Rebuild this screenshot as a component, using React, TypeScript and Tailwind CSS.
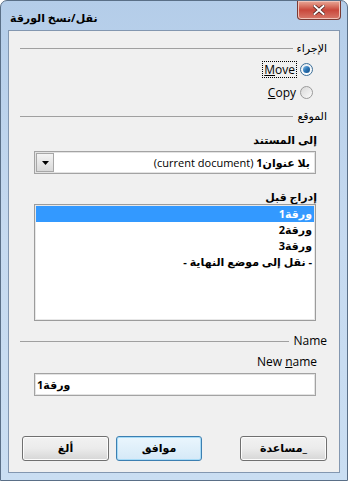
const ui = { fontFamily: '"Open Sans", "DejaVu Sans", sans-serif' };

function Header({ label, latin }: { label: string; latin?: boolean }) {
  return (
    <div className="flex h-4 items-center gap-[4px] pl-[11px] pr-[12px]">
      <span
        className={
          latin
            ? "whitespace-nowrap text-[12px] leading-4 text-black"
            : "whitespace-nowrap text-[11px] leading-4 text-black"
        }
      >
        {label}
      </span>
      <span className="h-px flex-1 bg-[#a0a0a0]" />
    </div>
  );
}

function Radio({ checked }: { checked?: boolean }) {
  return checked ? (
    <span className="flex h-[13px] w-[13px] shrink-0 items-center justify-center rounded-full border border-[#3c6f98] bg-gradient-to-b from-[#e9eef3] to-[#ffffff]">
      <span className="h-[7px] w-[7px] rounded-full bg-gradient-to-br from-[#7fc1ee] via-[#2a73b3] to-[#0f4f8a]" />
    </span>
  ) : (
    <span className="h-[13px] w-[13px] shrink-0 rounded-full border border-[#9a9a9a] bg-gradient-to-br from-[#d8d8d8] to-[#fbfbfb]" />
  );
}

function Button({ label, primary }: { label: string; primary?: boolean }) {
  return (
    <button
      className={
        primary
          ? "flex h-[25px] w-[86px] items-center justify-center rounded-[3px] border border-[#3c7fb1] bg-gradient-to-b from-[#eaf6fd] to-[#d5e9f7] text-[11px] font-bold text-black shadow-[inset_0_0_0_1px_#a6dbf7]"
          : "flex h-[25px] w-[87px] items-center justify-center rounded-[3px] border border-[#707070] bg-gradient-to-b from-[#f2f2f2] via-[#ebebeb] to-[#d6d6d6] text-[11px] font-bold text-black shadow-[inset_0_0_0_1px_#fcfcfc]"
      }
      style={ui}
    >
      {label}
    </button>
  );
}

export default function App() {
  const sheets = ["ورقة1", "ورقة2", "ورقة3", "- نقل إلى موضع النهاية -"];

  return (
    <div className="h-[481px] w-[348px] overflow-hidden bg-white" style={ui}>
      <div className="flex h-full flex-col rounded-t-[7px] border border-[#5a6f87] bg-gradient-to-b from-[#b4cde9] via-[#c6daf0] to-[#cadef2]">
        <div className="flex h-[29px] items-start justify-between">
          <span dir="rtl" className="pl-[9px] pt-[9px] text-[11px] font-bold leading-4 text-black">
            نقل/نسخ الورقة
          </span>
          <button className="mr-[6px] flex h-[19px] w-[44px] items-center justify-center rounded-b-[4px] border border-t-0 border-[#7a3a33] bg-gradient-to-b from-[#e8a898] via-[#c9473b] to-[#d7786a] shadow-[inset_0_0_0_1px_#f2c2b7]">
            <svg width="12" height="10" viewBox="0 0 12 10">
              <path d="M1.5 1 L10.5 9 M10.5 1 L1.5 9" stroke="#4a1c18" strokeWidth="3.4" strokeLinecap="square" />
              <path d="M1.5 1 L10.5 9 M10.5 1 L1.5 9" stroke="#ffffff" strokeWidth="2" strokeLinecap="square" />
            </svg>
          </button>
        </div>

        <div dir="rtl" className="mx-[7px] mb-[7px] flex flex-1 flex-col border border-[#8397b0] bg-[#f0f0f0] text-black">
          <div className="mt-[9px]">
            <Header label="الإجراء" />
          </div>

          <div className="mt-[4px] flex h-[18px] items-center gap-[3px] pr-[26px]">
            <Radio checked />
            <span dir="ltr" className="border border-dotted border-black px-px text-[12px] leading-[15px]">
              <span className="underline">M</span>ove
            </span>
          </div>
          <div className="mt-[5px] flex h-[18px] items-center gap-[4px] pr-[26px]">
            <Radio />
            <span dir="ltr" className="text-[12px] leading-[15px]">
              <span className="underline">C</span>opy
            </span>
          </div>

          <div className="mt-[7px]">
            <Header label="الموقع" />
          </div>

          <div className="mt-[8px] h-4 pr-[22px] text-[11px] font-bold leading-4">إلى المستند</div>

          <div className="ml-[25px] mr-[23px] mt-[3px] flex h-[23px] items-center border border-[#a3a3a3] bg-white p-px shadow-[inset_0_0_0_1px_#e3e3e3]">
            <span className="flex-1 truncate pr-[4px] text-[11px] font-bold leading-4">
              بلا عنوان1 <span className="font-normal text-[11px]">(current document)</span>
            </span>
            <span className="flex h-[19px] w-[18px] items-center justify-center border border-[#a7a7a7] bg-gradient-to-b from-[#f4f4f4] to-[#d9d9d9]">
              <svg width="7" height="4" viewBox="0 0 7 4">
                <path d="M0 0 H7 L3.5 4 Z" fill="#000" />
              </svg>
            </span>
          </div>

          <div className="mt-[16px] h-[14px] pr-[22px] text-[11px] font-bold leading-[14px]">إدراج قبل</div>

          <div className="ml-[25px] mr-[23px] flex h-[117px] flex-col border border-[#9c9c9c] bg-white pt-px shadow-[inset_0_0_0_1px_#e8e8e8]">
            {sheets.map((s, i) => (
              <div
                key={s}
                className={
                  i === 0
                    ? "mx-px flex h-4 items-center bg-[#3399ff] pr-[2px] text-[11px] font-bold text-white"
                    : "mx-px flex h-4 items-center pr-[2px] text-[11px] font-bold text-black"
                }
              >
                {s}
              </div>
            ))}
          </div>

          <div className="mt-[12px]">
            <Header label="Name" latin />
          </div>

          <div dir="ltr" className="mt-[5px] h-4 pr-[22px] text-right text-[12px] leading-4">
            New <span className="underline">n</span>ame
          </div>

          <div className="ml-[25px] mr-[23px] mt-[3px] flex h-[23px] items-center border border-[#a3a3a3] bg-white shadow-[inset_0_0_0_1px_#e3e3e3]">
            <span dir="ltr" className="w-full pl-[2px] text-left text-[11px] font-bold leading-4">
              <span dir="rtl">ورقة1</span>
            </span>
          </div>

          <div className="mt-[40px] flex items-center justify-between pl-[13px] pr-[12px]">
            <Button label="_مساعدة" />
            <div className="flex gap-[7px]">
              <Button label="موافق" primary />
              <Button label="ألغ" />
            </div>
          </div>
        </div>
      </div>
    </div>
  );
}
